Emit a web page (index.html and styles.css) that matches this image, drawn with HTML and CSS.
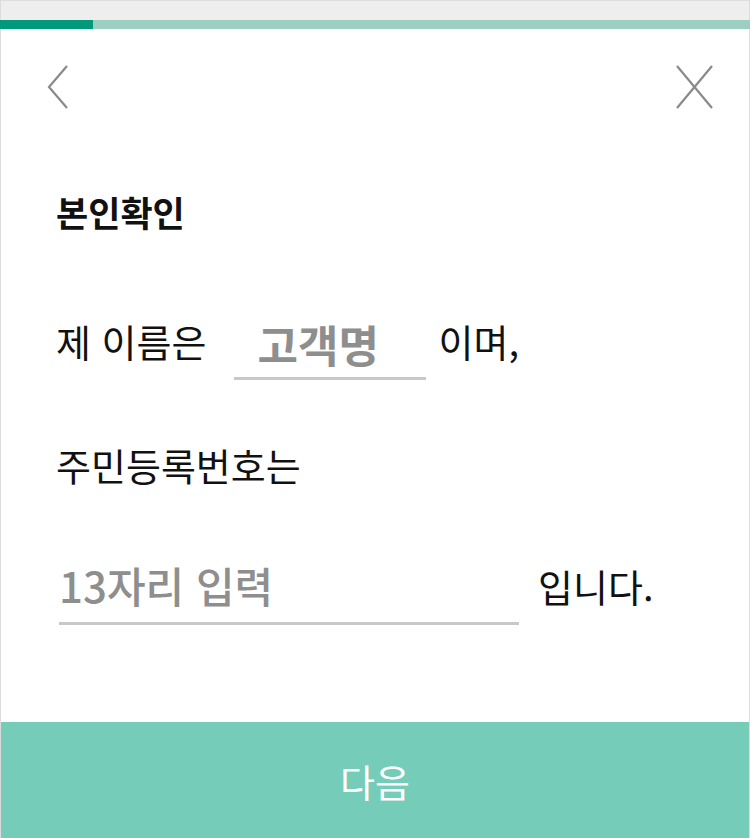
FILE: index.html
```html
<!DOCTYPE html>
<html lang="ko">
<head>
    <meta charset="UTF-8">
    <meta name="viewport" content="width=device-width, initial-scale=1.0">
    <title>본인확인</title>
    <link rel="stylesheet" href="styles.css">
</head>
<body>
    <div class="app">
        <div class="status-bar"></div>
        <div class="progress">
            <div class="progress-fill" style="width: 93px;"></div>
        </div>

        <div class="screen">
            <div class="nav">
                <button type="button" class="nav-btn" aria-label="뒤로">
                    <svg width="24" height="46" viewBox="0 0 24 46">
                        <polyline points="20,2 2,23 20,44" fill="none" stroke="#8a8a8a" stroke-width="2.2"/>
                    </svg>
                </button>
                <button type="button" class="nav-btn" aria-label="닫기">
                    <svg width="40" height="46" viewBox="0 0 40 46">
                        <line x1="2" y1="2" x2="37" y2="44" stroke="#8a8a8a" stroke-width="2.2"/>
                        <line x1="37" y1="2" x2="2" y2="44" stroke="#8a8a8a" stroke-width="2.2"/>
                    </svg>
                </button>
            </div>

            <div class="content">
                <h1 class="title">본인확인</h1>

                <div class="sentence">
                    <span>제 이름은</span>
                    <div class="field field-name">고객명</div>
                    <span>이며,</span>
                </div>

                <div class="sentence">
                    <span>주민등록번호는</span>
                </div>

                <div class="sentence">
                    <div class="field field-id">13자리 입력</div>
                    <span>입니다.</span>
                </div>
            </div>

            <button type="button" class="btn-next">다음</button>
        </div>
    </div>
</body>
</html>
```

FILE: styles.css
```css
:root {
    --primary-color: #009a7a;
    --primary-light: #9ccfc2;
    --button-color: #74ccb9;
    --text-color: #111;
    --placeholder: #8e8e8e;
    --line-color: #c8c8c8;
    --border-color: #dcdcdc;
}

* {
    margin: 0;
    padding: 0;
    box-sizing: border-box;
}

body {
    font-family: "Noto Sans CJK KR", "Noto Sans", sans-serif;
    color: var(--text-color);
    background-color: #fff;
}

.app {
    display: flex;
    flex-direction: column;
    height: 838px;
}

.status-bar {
    height: 20px;
    background-color: #eee;
    border-top: 1px solid var(--border-color);
    border-left: 1px solid var(--border-color);
    border-right: 1px solid var(--border-color);
}

.progress {
    height: 9px;
    background-color: var(--primary-light);
}

.progress-fill {
    height: 100%;
    background-color: var(--primary-color);
}

.screen {
    flex: 1;
    display: flex;
    flex-direction: column;
    border-left: 1px solid var(--border-color);
    border-right: 1px solid var(--border-color);
}

.nav {
    display: flex;
    justify-content: space-between;
    padding: 35px 34px 0 46px;
}

.nav-btn {
    background: none;
    border: none;
    display: block;
    line-height: 0;
}

.content {
    flex: 1;
    padding: 80px 0 0 55px;
}

.title {
    font-size: 35px;
    font-weight: 700;
    line-height: 44px;
}

.sentence {
    display: flex;
    align-items: center;
    font-size: 38px;
    line-height: 50px;
}

.sentence:nth-of-type(1) {
    margin-top: 67px;
}

.sentence:nth-of-type(2) {
    margin-top: 60px;
}

.sentence:nth-of-type(3) {
    margin-top: 56px;
}

.field {
    color: var(--placeholder);
    border-bottom: 3px solid var(--line-color);
    padding: 0 0 8px;
}

.field-name {
    width: 192px;
    margin: 18px 12px 0 28px;
    padding-left: 23px;
    font-size: 44px;
    font-weight: 700;
}

.field-id {
    width: 460px;
    margin: 14px 19px 0 3px;
    padding-bottom: 12px;
    font-size: 42px;
    font-weight: 500;
}

.btn-next {
    height: 116px;
    width: 100%;
    border: none;
    background-color: var(--button-color);
    color: #fff;
    font-family: inherit;
    font-size: 38px;
    font-weight: 400;
}
```
